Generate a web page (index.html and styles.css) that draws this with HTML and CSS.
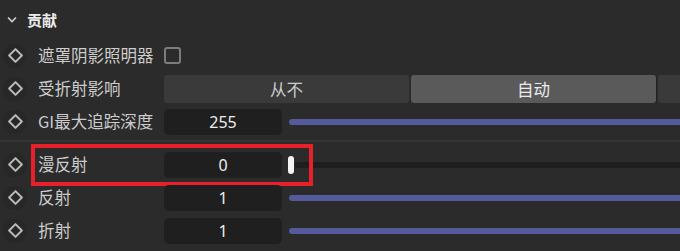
FILE: index.html
```html
<!DOCTYPE html>
<html lang="zh-CN">
<head>
  <meta charset="utf-8">
  <title>贡献</title>
  <link rel="stylesheet" href="styles.css">
</head>
<body>
  <div class="panel">

    <div class="header">
      <svg class="chevron" width="10" height="7" viewBox="0 0 10 7">
        <path d="M1 1.5 L5 5.5 L9 1.5" fill="none" stroke="#cfcfcf" stroke-width="1.6"/>
      </svg>
      <span>贡献</span>
    </div>

    <div class="group">
      <div class="row">
        <span class="key"><i></i></span>
        <label>遮罩阴影照明器</label>
        <div class="control"><span class="check"></span></div>
      </div>
      <div class="row">
        <span class="key"><i></i></span>
        <label>受折射影响</label>
        <div class="control seg">
          <span>从不</span>
          <span class="on">自动</span>
          <span></span>
        </div>
      </div>
      <div class="row">
        <span class="key"><i></i></span>
        <label>GI最大追踪深度</label>
        <div class="control">
          <span class="field">255</span>
          <span class="track full"></span>
        </div>
      </div>
    </div>

    <div class="group lower">
      <div class="row marked">
        <span class="key"><i></i></span>
        <label>漫反射</label>
        <div class="control">
          <span class="field">0</span>
          <span class="knob"></span>
          <span class="track empty"></span>
        </div>
      </div>
      <div class="row">
        <span class="key"><i></i></span>
        <label>反射</label>
        <div class="control">
          <span class="field">1</span>
          <span class="track full"></span>
        </div>
      </div>
      <div class="row">
        <span class="key"><i></i></span>
        <label>折射</label>
        <div class="control">
          <span class="field">1</span>
          <span class="track full"></span>
        </div>
      </div>
    </div>

  </div>
</body>
</html>
```

FILE: styles.css
```css
:root {
  --bg: #2b2b2b;
  --field: #1f1f1f;
  --seg: #3a3a3a;
  --seg-on: #5a5a5a;
  --text: #cdcdcd;
  --bright: #ececec;
  --accent: #555a9c;
  --mark: #e8202a;
  --font: "Noto Sans CJK SC", "Noto Sans", sans-serif;
}

body {
  margin: 0;
  height: 251px;
  overflow: hidden;
  background-color: var(--bg);
  color: var(--text);
  font: 400 16.5px var(--font);
}

.panel {overflow: hidden}

.header {
  display: flex;
  align-items: center;
  height: 39px;
  padding-left: 7px;
  color: var(--bright);
  font-size: 15px;
  font-weight: 700;
}

.chevron {margin-right: 10px}

.row {
  position: relative;
  display: grid;
  grid-template-columns: 29px 135px 1fr;
  align-items: center;
  height: 33px;
}

.key {
  display: flex;
  justify-content: center;
  align-items: center;
  width: 24px;
  height: 24px;
  margin-left: 3px;
  border-radius: 50%;
  background-color: #272727;
}

.key i {
  width: 7px;
  height: 7px;
  border: 2px solid #b9b9b9;
  border-radius: 1px;
  transform: rotate(45deg);
}

label {
  padding-left: 9px;
  white-space: nowrap;
  line-height: 1;
}

.control {
  display: flex;
  align-items: center;
  overflow: hidden;
}

.check {
  box-sizing: border-box;
  width: 17px;
  height: 17px;
  border: 2px solid #7c7c7c;
  border-radius: 3px;
}

.seg {
  gap: 2px;
  height: 28px;
}

.seg span {
  display: flex;
  flex-shrink: 0;
  justify-content: center;
  align-items: center;
  width: 245px;
  height: 28px;
  border-radius: 3px;
  background-color: var(--seg);
}

.seg span.on {
  background-color: var(--seg-on);
  color: var(--bright);
  box-shadow: 1px 1px 0 #222;
}

.field {
  display: flex;
  flex-shrink: 0;
  justify-content: center;
  align-items: center;
  width: 118px;
  height: 26px;
  border-radius: 5px;
  background-color: var(--field);
  color: var(--bright);
  font-family: "Noto Sans", sans-serif;
  font-size: 16px;
}

.track {
  flex: 1;
  height: 6px;
  margin-left: 7px;
  border-radius: 3px 0 0 3px;
}

.track.full {background-color: var(--accent)}

.track.empty {
  margin-left: 1px;
  background-color: #1e1e1e;
}

.knob {
  flex-shrink: 0;
  width: 6px;
  height: 18px;
  margin-left: 6px;
  border-radius: 3px;
  background-color: #f4f4f4;
}

.lower {
  margin-top: 2px;
  padding-top: 6px;
  border-top: 2px solid #343434;
}

.marked::after {
  content: "";
  position: absolute;
  left: 31px;
  top: -4px;
  width: 282px;
  height: 42px;
  box-sizing: border-box;
  border: 4px solid var(--mark);
}
```
